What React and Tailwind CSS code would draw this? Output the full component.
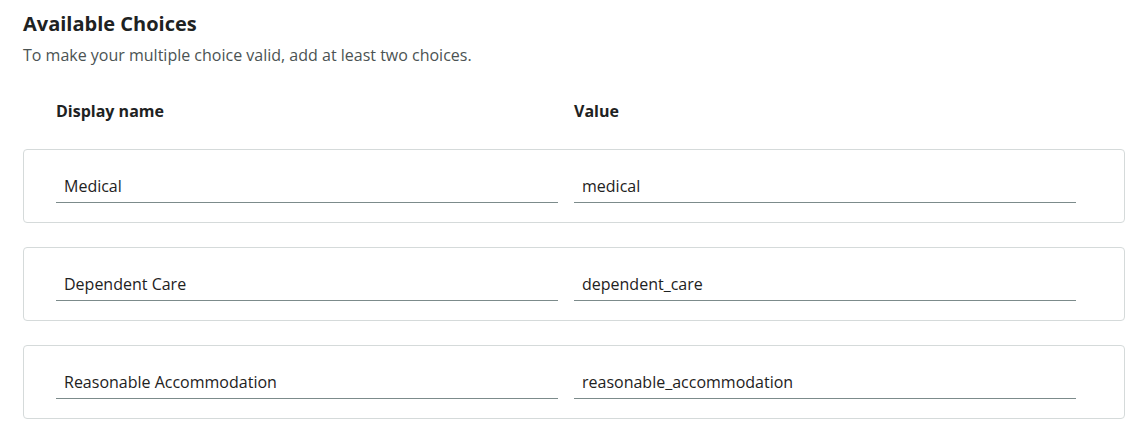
const choices = [
  { name: 'Medical', value: 'medical' },
  { name: 'Dependent Care', value: 'dependent_care' },
  { name: 'Reasonable Accommodation', value: 'reasonable_accommodation' },
];

function ChoiceRow({ choice }) {
  return (
    <div className="h-[74px] border border-[#d5dada] rounded-[4px] pl-8 pr-12 pt-[17px] grid grid-cols-2 gap-4 items-start">
      <input
        defaultValue={choice.name}
        className="h-9 w-full border-b border-[#7c8b8b] px-2 pt-[3px] text-[16px] text-[#1e2222] outline-none bg-transparent"
      />
      <input
        defaultValue={choice.value}
        className="h-9 w-full border-b border-[#7c8b8b] px-2 pt-[3px] text-[16px] text-[#1e2222] outline-none bg-transparent"
      />
    </div>
  );
}

export default function App() {
  return (
    <div className="min-h-screen bg-white px-[23px] pt-[10px] pb-4 w-[1139px] text-[#1e2222]" style={{ fontFamily: '"Open Sans", sans-serif' }}>
      {/* Header */}
      <h2 className="text-[20px] leading-7 font-bold">Available Choices</h2>
      <p className="text-[16px] leading-6 text-[#4b5353] mt-[5px]">
        To make your multiple choice valid, add at least two choices.
      </p>

      <div className="w-[1102px]">
        {/* Column labels */}
        <div className="grid grid-cols-2 gap-4 pl-[33px] pr-[49px] mt-[32px] mb-[26px]">
          <span className="text-[16px] leading-6 font-bold">Display name</span>
          <span className="text-[16px] leading-6 font-bold">Value</span>
        </div>

        <div className="flex flex-col gap-[24px]">
          {choices.map(c => <ChoiceRow key={c.value} choice={c} />)}
        </div>
      </div>
    </div>
  );
}
